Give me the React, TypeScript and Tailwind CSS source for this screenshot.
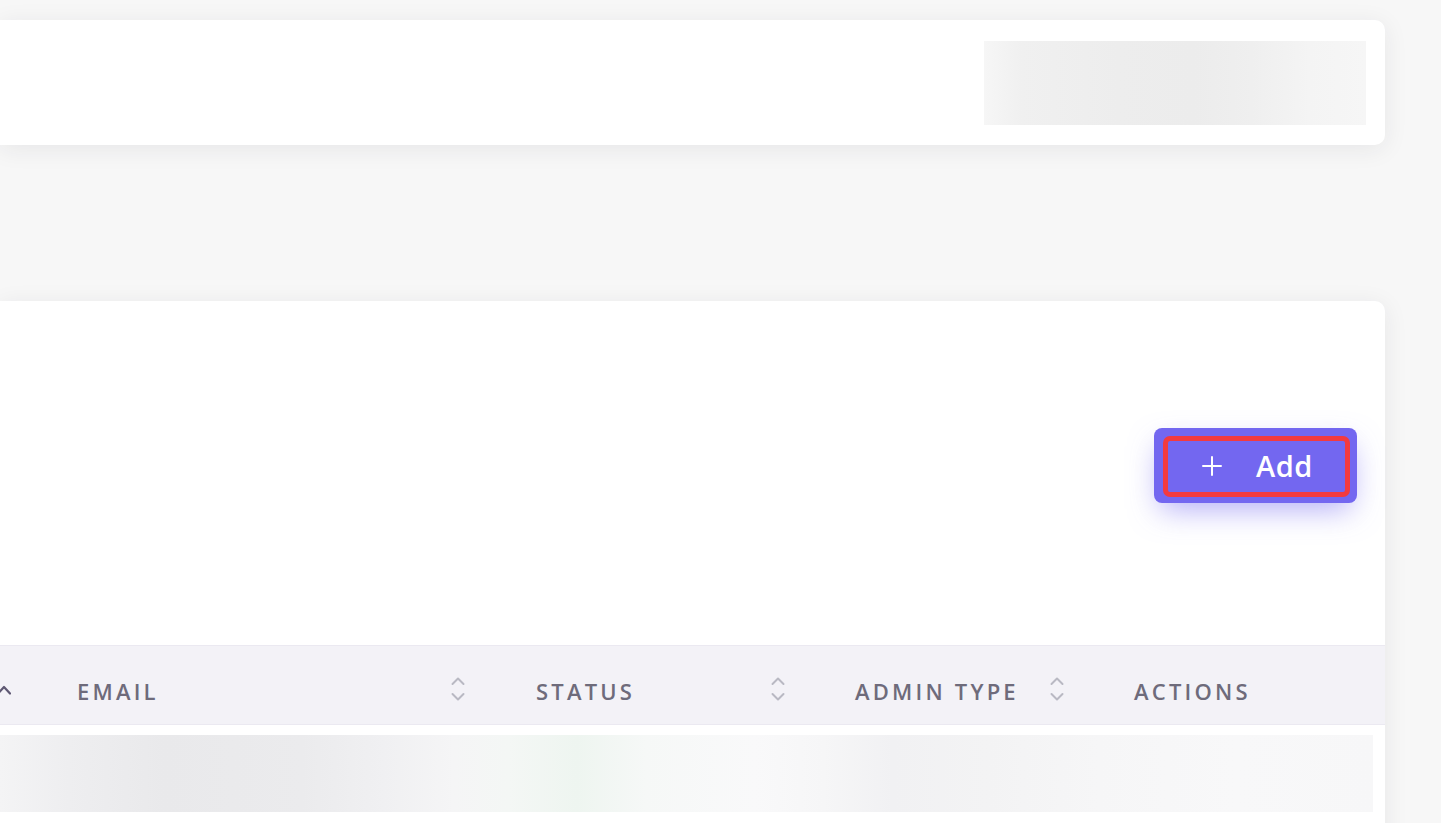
import React from "react";

function SortIcon({ className = "" }: { className?: string }) {
  return (
    <svg width="16" height="30" viewBox="0 0 16 30" className={className} fill="none">
      <path d="M2.5 10 L8 4.5 L13.5 10" stroke="#b9b9c3" strokeWidth="2" strokeLinecap="round" strokeLinejoin="round" />
      <path d="M2.5 20 L8 25.5 L13.5 20" stroke="#b9b9c3" strokeWidth="2" strokeLinecap="round" strokeLinejoin="round" />
    </svg>
  );
}

function HeaderText({ children }: { children: React.ReactNode }) {
  return (
    <span className="mt-[3px] text-[22px] font-semibold tracking-[3.2px] text-[#6e6b7b] leading-none whitespace-nowrap">
      {children}
    </span>
  );
}

export default function App() {
  return (
    <div
      className="min-h-screen h-[823px] overflow-hidden bg-[#f7f7f7]"
      style={{ fontFamily: '"Open Sans", "Liberation Sans", sans-serif' }}
    >
      <div className="pt-[20px] pr-[56px]">
        {/* top card */}
        <div className="h-[125px] bg-white rounded-r-[10px] shadow-[0_4px_24px_0_rgba(34,41,47,0.08)] flex items-center justify-end pr-[19px]">
          <div className="w-[382px] h-[84px] bg-[linear-gradient(90deg,#f6f6f6_0%,#f0f0f0_10%,#ededed_35%,#ececec_55%,#efefef_70%,#f4f4f4_85%,#f6f6f6_100%)]" />
        </div>

        {/* main card */}
        <div className="mt-[156px] bg-white rounded-tr-[10px] shadow-[0_4px_24px_0_rgba(34,41,47,0.08)] h-[560px]">
          <div className="h-[344px] pt-[127px] pr-[28px] flex justify-end items-start">
            <button className="relative w-[203px] h-[75px] rounded-[8px] bg-[#7367f0] text-white flex items-center pl-[48px] shadow-[0_12px_30px_-6px_rgba(115,103,240,0.55)]">
              <svg width="20" height="20" viewBox="0 0 20 20" fill="none">
                <path d="M10 1 V19 M1 10 H19" stroke="white" strokeWidth="2" strokeLinecap="round" />
              </svg>
              <span className="ml-[34px] text-[29px] font-semibold leading-none tracking-[0.5px]">Add</span>
              <span className="absolute left-[9px] top-[8px] right-[7px] bottom-[6px] border-[5px] border-[#f33a3f] rounded-[7px]" />
            </button>
          </div>

          {/* table header */}
          <div className="h-[80px] pt-[8px] bg-[#f3f2f7] border-t border-b border-[#ebe9f1] flex items-center">
            <div className="w-[38px] flex items-center">
              <svg width="14" height="12" viewBox="0 0 14 12" fill="none" className="-ml-[3px] mt-[2px]">
                <path d="M1 9.5 L7 3 L13 9.5" stroke="#5e5873" strokeWidth="2.2" strokeLinecap="round" strokeLinejoin="round" />
              </svg>
            </div>
            <div className="w-[459px] pl-[39px] pr-[31px] flex items-center justify-between">
              <HeaderText>EMAIL</HeaderText>
              <SortIcon />
            </div>
            <div className="w-[319px] pl-[39px] pr-[30px] flex items-center justify-between">
              <HeaderText>STATUS</HeaderText>
              <SortIcon />
            </div>
            <div className="w-[279px] pl-[39px] pr-[30px] flex items-center justify-between">
              <HeaderText>ADMIN TYPE</HeaderText>
              <SortIcon />
            </div>
            <div className="flex-1 pl-[39px] flex items-center">
              <HeaderText>ACTIONS</HeaderText>
            </div>
          </div>

          {/* blurred row */}
          <div className="pt-[10px] pr-[12px]">
            <div className="h-[77px] bg-[linear-gradient(90deg,#f4f4f5_0%,#eeeef0_5%,#e9e9eb_12%,#ebebed_22%,#f0f0f2_28%,#f5f5f6_33%,#f4f7f5_37%,#eef5f0_42%,#f6f8f7_47%,#f9f9fa_55%,#f6f6f7_60%,#f1f1f3_65%,#f3f3f4_72%,#f6f6f7_80%,#f8f8f9_90%,#f7f7f8_100%)]" />
          </div>
        </div>
      </div>
    </div>
  );
}
